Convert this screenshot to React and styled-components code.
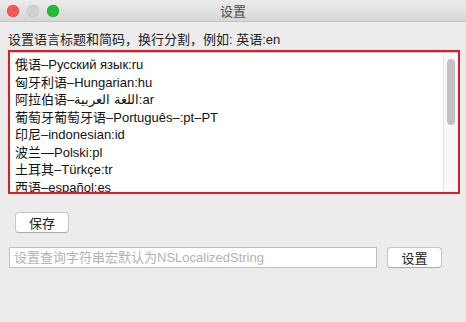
import React from 'react';
import styled, { createGlobalStyle } from 'styled-components';

const GlobalStyle = createGlobalStyle`
  html, body {
    margin: 0;
    padding: 0;
    background: #ececec;
  }
  body {
    font-family: "Liberation Sans", "Noto Sans CJK SC", sans-serif;
    font-size: 13px;
    color: #222;
  }
`;

const Window = styled.div`
  width: 466px;
  height: 322px;
  display: flex;
  flex-direction: column;
  background: #ececec;
  overflow: hidden;
`;

const TitleBar = styled.div`
  position: relative;
  height: 21px;
  flex: none;
  display: flex;
  align-items: center;
  justify-content: center;
  background: linear-gradient(#ebebeb, #d6d6d6);
  border-bottom: 1px solid #c4c4c4;
  color: #4d4d4d;
  font-size: 13px;
`;

const Lights = styled.div`
  position: absolute;
  left: 7px;
  top: 5px;
  display: flex;
  gap: 8px;
`;

const Light = styled.span`
  width: 12px;
  height: 12px;
  border-radius: 50%;
  background: ${(p) => p.color};
  box-shadow: inset 0 0 0 0.5px ${(p) => p.edge};
`;

const Content = styled.div`
  flex: 1;
  display: flex;
  flex-direction: column;
  padding: 10px 6px 0 8px;
`;

const Label = styled.div`
  height: 16px;
  line-height: 16px;
  margin-bottom: 2px;
  color: #222;
`;

const Highlight = styled.div`
  height: 140px;
  border: 2px solid #d81e2a;
  display: flex;
`;

const ScrollView = styled.div`
  flex: 1;
  display: flex;
  background: #fff;
  border-top: 1px solid #c9c9c9;
  overflow: hidden;
`;

const Lines = styled.div`
  flex: 1;
  padding: 3px 0 0 5px;
  overflow: hidden;
`;

const Line = styled.div`
  height: 17.5px;
  line-height: 17.5px;
  white-space: nowrap;
  color: #111;
`;

const Track = styled.div`
  width: 14px;
  flex: none;
  margin-right: 1px;
  background: #f8f8f8;
  border-left: 1px solid #e4e4e4;
  padding: 6px 0 0 3px;
  box-sizing: border-box;
`;

const Thumb = styled.div`
  width: 8px;
  height: 66px;
  border-radius: 4px;
  background: #c2c2c2;
`;

const Button = styled.button`
  height: 21px;
  width: ${(p) => p.w}px;
  padding: 0;
  margin: 0;
  flex: none;
  font-family: inherit;
  font-size: 13px;
  color: #222;
  background: #fff;
  border: 1px solid #c5c5c5;
  border-bottom-color: #adadad;
  border-radius: 4px;
  box-shadow: 0 0.5px 0 rgba(0, 0, 0, 0.05);
`;

const SaveRow = styled.div`
  display: flex;
  margin-top: 18px;
  padding-left: 7px;
`;

const QueryRow = styled.div`
  display: flex;
  gap: 10px;
  margin-top: 14px;
  padding-left: 1px;
`;

const Input = styled.input`
  width: 368px;
  height: 21px;
  box-sizing: border-box;
  margin: 0;
  padding: 0 4px;
  font-family: inherit;
  font-size: 13px;
  background: #fff;
  border: 1px solid #bfbfbf;
  outline: none;
  &::placeholder {
    color: #b3b3b3;
  }
`;

const languages = [
  '俄语–Русский язык:ru',
  '匈牙利语–Hungarian:hu',
  '阿拉伯语–اللغة العربية:ar',
  '葡萄牙葡萄牙语–Português–:pt–PT',
  '印尼–indonesian:id',
  '波兰—Polski:pl',
  '土耳其–Türkçe:tr',
  '西语–español:es',
];

const App = () => {
  return (
    <Window>
      <GlobalStyle />
      <TitleBar>
        <Lights>
          <Light color="#fc5753" edge="#df3d38" />
          <Light color="#d0d0d0" edge="#bdbdbd" />
          <Light color="#1ebd3a" edge="#15a02c" />
        </Lights>
        设置
      </TitleBar>
      <Content>
        <Label>设置语言标题和简码，换行分割，例如: 英语:en</Label>
        <Highlight>
          <ScrollView>
            <Lines>
              {languages.map((l) => (
                <Line key={l}>{l}</Line>
              ))}
            </Lines>
            <Track>
              <Thumb />
            </Track>
          </ScrollView>
        </Highlight>
        <SaveRow>
          <Button w={54}>保存</Button>
        </SaveRow>
        <QueryRow>
          <Input placeholder="设置查询字符串宏默认为NSLocalizedString" />
          <Button w={55}>设置</Button>
        </QueryRow>
      </Content>
    </Window>
  );
};

export default App;
